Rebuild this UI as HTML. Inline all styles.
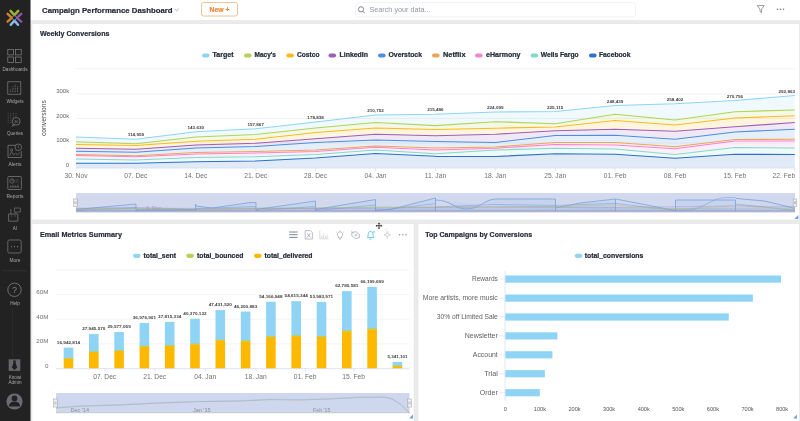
<!DOCTYPE html>
<html lang="en"><head><meta charset="utf-8"><title>Campaign Performance Dashboard</title>
<style>
html,body{margin:0;padding:0;background:#e9e9e9;overflow:hidden}
svg{display:block;will-change:transform}
text{font-family:"Liberation Sans",sans-serif}
</style></head><body>
<svg width="800" height="421" viewBox="0 0 800 421">
<rect x="0" y="0" width="800" height="421" fill="#ebebeb"/>
<rect x="30.5" y="0" width="769.5" height="20" fill="#ffffff"/>
<rect x="32" y="23.7" width="767.6" height="196.3" fill="#fff" stroke="#e0e0e0" stroke-width="0.5"/>
<rect x="32" y="223.5" width="382" height="200" fill="#fff" stroke="#e0e0e0" stroke-width="0.5"/>
<rect x="418" y="223.5" width="381.6" height="200" fill="#fff" stroke="#e0e0e0" stroke-width="0.5"/>
<rect x="0" y="0" width="30.5" height="421" fill="#222222"/>
<text x="42" y="13.2" font-size="8.0" font-weight="bold" fill="#242d3a" text-anchor="start" stroke="#242d3a" stroke-width="0.22" textLength="130.6" lengthAdjust="spacingAndGlyphs" >Campaign Performance Dashboard</text>
<path d="M174.6 8.8 L176.7 10.9 L178.8 8.8" fill="none" stroke="#8a8f98" stroke-width="0.7"/>
<rect x="201.5" y="2.5" width="36" height="13.5" rx="2" fill="#fff" stroke="#f2b27c" stroke-width="0.8"/>
<text x="219.5" y="12" font-size="7" font-weight="bold" fill="#ee8a3c" text-anchor="middle" stroke="#ee8a3c" stroke-width="0.22" textLength="20" lengthAdjust="spacingAndGlyphs" >New +</text>
<rect x="355.5" y="2.6" width="280" height="14.4" rx="3" fill="#fff" stroke="#ebedf0" stroke-width="0.7"/>
<circle cx="361" cy="9.3" r="2.6" fill="none" stroke="#5f6875" stroke-width="0.8"/><path d="M363 11.3 L364.8 13.1" stroke="#5f6875" stroke-width="0.8"/>
<text x="369.5" y="12.2" font-size="7.2" font-weight="normal" fill="#8f97a3" text-anchor="start" textLength="61" lengthAdjust="spacingAndGlyphs" >Search your data...</text>
<path d="M757.3 5.6 H764.2 L761.6 9.2 V12.6 L760 11.4 V9.2 Z" fill="none" stroke="#6b7380" stroke-width="0.7" stroke-linejoin="round"/>
<circle cx="777.5" cy="9.3" r="0.8" fill="#6b7380"/>
<circle cx="780.5" cy="9.3" r="0.8" fill="#6b7380"/>
<circle cx="783.5" cy="9.3" r="0.8" fill="#6b7380"/>
<g fill="none" stroke-width="2.5" stroke-linecap="round" stroke-linejoin="miter"><path d="M10.6 10.9 L14.4 15.2 L18.2 10.9" stroke="#9bb23a"/><path d="M7.6 13.9 L11.8 17.8 L7.6 21.7" stroke="#d67f2a"/><path d="M21.2 13.9 L17 17.8 L21.2 21.7" stroke="#9150ab"/><path d="M10.8 24.8 L14.4 20.6 L18 24.8" stroke="#86bce6"/></g><circle cx="14.4" cy="17.8" r="2.1" fill="#222" stroke="#7d8995" stroke-width="0.9"/>
<rect x="7.8" y="49.5" width="5.6" height="5.4" fill="none" stroke="#828282" stroke-width="0.7"/>
<rect x="15.6" y="49.5" width="5.6" height="5.4" fill="none" stroke="#828282" stroke-width="0.7"/>
<rect x="7.8" y="57" width="5.6" height="5.4" fill="none" stroke="#828282" stroke-width="0.7"/>
<rect x="15.6" y="57" width="5.6" height="5.4" fill="none" stroke="#828282" stroke-width="0.7"/>
<text x="15" y="71.3" font-size="4.5" font-weight="normal" fill="#a9a9a9" text-anchor="middle" textLength="25" lengthAdjust="spacingAndGlyphs" >Dashboards</text>
<rect x="7.8" y="81.8" width="13" height="12.4" fill="none" stroke="#828282" stroke-width="0.7"/>
<path d="M10.6 92 V89" stroke="#828282" stroke-width="0.8" stroke-dasharray="0.9 0.7"/>
<path d="M12.899999999999999 92 V86.5" stroke="#828282" stroke-width="0.8" stroke-dasharray="0.9 0.7"/>
<path d="M15.2 92 V84" stroke="#828282" stroke-width="0.8" stroke-dasharray="0.9 0.7"/>
<path d="M17.5 92 V86" stroke="#828282" stroke-width="0.8" stroke-dasharray="0.9 0.7"/>
<text x="15" y="102.6" font-size="4.5" font-weight="normal" fill="#a9a9a9" text-anchor="middle" textLength="17" lengthAdjust="spacingAndGlyphs" >Widgets</text>
<path d="M8.2 113 V123.5" stroke="#828282" stroke-width="0.6" stroke-dasharray="1 0.8" opacity="0.75"/>
<path d="M10.799999999999999 113 V123.5" stroke="#828282" stroke-width="0.6" stroke-dasharray="1 0.8" opacity="0.75"/>
<path d="M13.399999999999999 113 V123.5" stroke="#828282" stroke-width="0.6" stroke-dasharray="1 0.8" opacity="0.75"/>
<path d="M16.0 113 V123.5" stroke="#828282" stroke-width="0.6" stroke-dasharray="1 0.8" opacity="0.75"/>
<circle cx="16.2" cy="121.3" r="3.9" fill="#222" stroke="#828282" stroke-width="0.7"/>
<path d="M13.4 124.2 L12 126.3 L14.9 125" fill="none" stroke="#828282" stroke-width="0.6"/>
<text x="16.2" y="122.7" font-size="3.6" font-weight="normal" fill="#828282" text-anchor="middle" >30</text>
<text x="15" y="134.5" font-size="4.5" font-weight="normal" fill="#a9a9a9" text-anchor="middle" textLength="16" lengthAdjust="spacingAndGlyphs" >Queries</text>
<path d="M15.5 145.3 H8 V157.5 H21.3 V151" fill="none" stroke="#828282" stroke-width="0.7"/>
<circle cx="18.3" cy="147.3" r="3.3" fill="#222" stroke="#828282" stroke-width="0.7"/>
<path d="M18.3 145.5 V147.8 M18.3 148.6 V149.2" stroke="#828282" stroke-width="0.6"/>
<circle cx="11.6" cy="150" r="1.1" fill="none" stroke="#828282" stroke-width="0.6"/>
<path d="M9.6 155.5 L11.6 151.6 L13.6 155 L15.8 153 L17.6 155.2 L19.8 152.4" fill="none" stroke="#828282" stroke-width="0.6"/>
<text x="15" y="166.2" font-size="4.5" font-weight="normal" fill="#a9a9a9" text-anchor="middle" textLength="13" lengthAdjust="spacingAndGlyphs" >Alerts</text>
<rect x="7.8" y="176.5" width="13.6" height="13" rx="1" fill="none" stroke="#828282" stroke-width="0.7"/>
<circle cx="12" cy="181" r="2.2" fill="none" stroke="#828282" stroke-width="0.6"/><path d="M12 179.6 V181 H13.2" fill="none" stroke="#828282" stroke-width="0.5"/>
<path d="M15.6 180 H19 M15.6 182 H19" stroke="#828282" stroke-width="0.6" stroke-dasharray="1 0.6"/>
<path d="M10 187 H19.2 M10.6 187 V185.5 M13 187 V184.8 M15.4 187 V185.6 M17.8 187 V184.6" stroke="#828282" stroke-width="0.6"/>
<text x="15" y="197.8" font-size="4.5" font-weight="normal" fill="#a9a9a9" text-anchor="middle" textLength="17" lengthAdjust="spacingAndGlyphs" >Reports</text>
<path d="M8.6 214 H17.8 V221.2 H8.6 Z" fill="none" stroke="#828282" stroke-width="0.7"/>
<path d="M14.4 208 H20.4 V212 H17 L15.6 213.2 V212 H14.4 Z" fill="none" stroke="#828282" stroke-width="0.6"/>
<path d="M10.8 210.4 V213.8" stroke="#828282" stroke-width="0.6"/><circle cx="10.8" cy="209.8" r="0.6" fill="#828282"/>
<path d="M11.4 215.4 V216.6 M15 215.4 V216.6" stroke="#828282" stroke-width="0.7"/>
<text x="15" y="229.5" font-size="4.5" font-weight="normal" fill="#a9a9a9" text-anchor="middle" >AI</text>
<rect x="7.8" y="240" width="13.4" height="13" rx="1.6" fill="none" stroke="#828282" stroke-width="0.7"/>
<circle cx="11.6" cy="246.7" r="0.6" fill="#828282"/>
<circle cx="14.5" cy="246.7" r="0.6" fill="#828282"/>
<circle cx="17.4" cy="246.7" r="0.6" fill="#828282"/>
<text x="15" y="261.6" font-size="4.5" font-weight="normal" fill="#a9a9a9" text-anchor="middle" textLength="11" lengthAdjust="spacingAndGlyphs" >More</text>
<path d="M3 270.8 H27" stroke="#555" stroke-width="0.5" stroke-dasharray="1.2 0.5"/>
<circle cx="14.5" cy="289.8" r="6.7" fill="none" stroke="#828282" stroke-width="0.8"/>
<text x="14.5" y="293" font-size="9" font-weight="normal" fill="#828282" text-anchor="middle" >?</text>
<text x="15" y="304.6" font-size="4.5" font-weight="normal" fill="#a9a9a9" text-anchor="middle" textLength="9.5" lengthAdjust="spacingAndGlyphs" >Help</text>
<path d="M12.4 309 V357" stroke="#303030" stroke-width="0.8"/>
<rect x="8.7" y="359.3" width="11.6" height="11.6" fill="#63676c"/>
<path d="M13 360.6 H16 L15.5 362.8 L17.2 367.6 L14.5 370 L11.8 367.6 L13.5 362.8 Z" fill="#1e1e1e"/>
<text x="15" y="379" font-size="4.5" font-weight="normal" fill="#a9a9a9" text-anchor="middle" textLength="12.5" lengthAdjust="spacingAndGlyphs" >Knowi</text>
<text x="15" y="384" font-size="4.5" font-weight="normal" fill="#a9a9a9" text-anchor="middle" textLength="13" lengthAdjust="spacingAndGlyphs" >Admin</text>
<circle cx="14.5" cy="401.5" r="8.1" fill="#696d73"/>
<circle cx="14.5" cy="398.4" r="2.9" fill="#222"/>
<path d="M9 406.6 C9 402.8 11.4 401.8 14.5 401.8 C17.6 401.8 20 402.8 20 406.6 Z" fill="#222"/>
<text x="40" y="36.1" font-size="7.7" font-weight="bold" fill="#242d3a" text-anchor="start" stroke="#242d3a" stroke-width="0.22" textLength="69.5" lengthAdjust="spacingAndGlyphs" >Weekly Conversions</text>
<rect x="202" y="53.4" width="7.6" height="4.2" rx="2.1" fill="#8fd4f5"/>
<text x="212.6" y="57.1" font-size="6.6" font-weight="bold" fill="#242d3a" text-anchor="start" stroke="#242d3a" stroke-width="0.22" textLength="21" lengthAdjust="spacingAndGlyphs" >Target</text>
<rect x="244" y="53.4" width="7.6" height="4.2" rx="2.1" fill="#b3d455"/>
<text x="254.5" y="57.1" font-size="6.6" font-weight="bold" fill="#242d3a" text-anchor="start" stroke="#242d3a" stroke-width="0.22" textLength="21.5" lengthAdjust="spacingAndGlyphs" >Macy's</text>
<rect x="286.3" y="53.4" width="7.6" height="4.2" rx="2.1" fill="#fcbb1d"/>
<text x="297" y="57.1" font-size="6.6" font-weight="bold" fill="#242d3a" text-anchor="start" stroke="#242d3a" stroke-width="0.22" textLength="22.5" lengthAdjust="spacingAndGlyphs" >Costco</text>
<rect x="328.5" y="53.4" width="7.6" height="4.2" rx="2.1" fill="#9c5fb8"/>
<text x="339.5" y="57.1" font-size="6.6" font-weight="bold" fill="#242d3a" text-anchor="start" stroke="#242d3a" stroke-width="0.22" textLength="28.5" lengthAdjust="spacingAndGlyphs" >LinkedIn</text>
<rect x="378" y="53.4" width="7.6" height="4.2" rx="2.1" fill="#4a8fe2"/>
<text x="388.5" y="57.1" font-size="6.6" font-weight="bold" fill="#242d3a" text-anchor="start" stroke="#242d3a" stroke-width="0.22" textLength="33.5" lengthAdjust="spacingAndGlyphs" >Overstock</text>
<rect x="432" y="53.4" width="7.6" height="4.2" rx="2.1" fill="#f0a35a"/>
<text x="443" y="57.1" font-size="6.6" font-weight="bold" fill="#242d3a" text-anchor="start" stroke="#242d3a" stroke-width="0.22" textLength="22.5" lengthAdjust="spacingAndGlyphs" >Netflix</text>
<rect x="475" y="53.4" width="7.6" height="4.2" rx="2.1" fill="#f684d2"/>
<text x="486" y="57.1" font-size="6.6" font-weight="bold" fill="#242d3a" text-anchor="start" stroke="#242d3a" stroke-width="0.22" textLength="34.5" lengthAdjust="spacingAndGlyphs" >eHarmony</text>
<rect x="530.6" y="53.4" width="7.6" height="4.2" rx="2.1" fill="#7fdcc9"/>
<text x="540.7" y="57.1" font-size="6.6" font-weight="bold" fill="#242d3a" text-anchor="start" stroke="#242d3a" stroke-width="0.22" textLength="38" lengthAdjust="spacingAndGlyphs" >Wells Fargo</text>
<rect x="589" y="53.4" width="7.6" height="4.2" rx="2.1" fill="#2e6fcf"/>
<text x="599" y="57.1" font-size="6.6" font-weight="bold" fill="#242d3a" text-anchor="start" stroke="#242d3a" stroke-width="0.22" textLength="31.5" lengthAdjust="spacingAndGlyphs" >Facebook</text>
<path d="M76 68.7 H795" stroke="#ececec" stroke-width="0.7"/>
<path d="M76 94.0 H795" stroke="#ececec" stroke-width="0.7"/>
<path d="M76 118.4 H795" stroke="#ececec" stroke-width="0.7"/>
<path d="M76 143.0 H795" stroke="#ececec" stroke-width="0.7"/>
<text x="69.2" y="93.1" font-size="6.0" font-weight="normal" fill="#666" text-anchor="end" >300k</text>
<text x="69.2" y="117.5" font-size="6.0" font-weight="normal" fill="#666" text-anchor="end" >200k</text>
<text x="69.2" y="142.1" font-size="6.0" font-weight="normal" fill="#666" text-anchor="end" >100k</text>
<text x="69.2" y="166.79999999999998" font-size="6.0" font-weight="normal" fill="#666" text-anchor="end" >0</text>
<text x="0" y="0" font-size="7.6" font-weight="normal" fill="#444" text-anchor="middle" textLength="36" lengthAdjust="spacingAndGlyphs" transform="translate(45.6,118) rotate(-90)">conversions</text>
<path d="M76.0 163.2 L135.9 163.2 L195.8 161.7 L255.7 161 L315.6 158 L375.5 153.5 L435.4 156.3 L495.3 156.5 L555.2 153.7 L615.1 154.3 L675.0 158.2 L734.9 154.2 L794.8 154.5 L794.8 167.7 L734.9 167.7 L675.0 167.7 L615.1 167.7 L555.2 167.7 L495.3 167.7 L435.4 167.7 L375.5 167.7 L315.6 167.7 L255.7 167.7 L195.8 167.7 L135.9 167.7 L76.0 167.7 Z" fill="#2e6fcf" fill-opacity="0.14"/>
<path d="M76.0 159 L135.9 160 L195.8 157.5 L255.7 156.7 L315.6 154.5 L375.5 150 L435.4 153.7 L495.3 150 L555.2 148.2 L615.1 149 L675.0 154.5 L734.9 147.5 L794.8 148 L794.8 154.5 L734.9 154.2 L675.0 158.2 L615.1 154.3 L555.2 153.7 L495.3 156.5 L435.4 156.3 L375.5 153.5 L315.6 158 L255.7 161 L195.8 161.7 L135.9 163.2 L76.0 163.2 Z" fill="#7fdcc9" fill-opacity="0.14"/>
<path d="M76.0 155.5 L135.9 156.7 L195.8 154 L255.7 153 L315.6 151.5 L375.5 147.2 L435.4 150 L495.3 148.2 L555.2 144.5 L615.1 145 L675.0 148.7 L734.9 141 L794.8 141 L794.8 148 L734.9 147.5 L675.0 154.5 L615.1 149 L555.2 148.2 L495.3 150 L435.4 153.7 L375.5 150 L315.6 154.5 L255.7 156.7 L195.8 157.5 L135.9 160 L76.0 159 Z" fill="#f684d2" fill-opacity="0.14"/>
<path d="M76.0 154.5 L135.9 155.7 L195.8 152.5 L255.7 151.5 L315.6 150 L375.5 146 L435.4 148 L495.3 147 L555.2 142.5 L615.1 142.5 L675.0 146.7 L734.9 139.5 L794.8 139.2 L794.8 141 L734.9 141 L675.0 148.7 L615.1 145 L555.2 144.5 L495.3 148.2 L435.4 150 L375.5 147.2 L315.6 151.5 L255.7 153 L195.8 154 L135.9 156.7 L76.0 155.5 Z" fill="#f0a35a" fill-opacity="0.14"/>
<path d="M76.0 151.2 L135.9 152.2 L195.8 148 L255.7 146.5 L315.6 142.5 L375.5 140 L435.4 141.5 L495.3 142.5 L555.2 135.5 L615.1 135.2 L675.0 139.2 L734.9 132 L794.8 129.2 L794.8 139.2 L734.9 139.5 L675.0 146.7 L615.1 142.5 L555.2 142.5 L495.3 147 L435.4 148 L375.5 146 L315.6 150 L255.7 151.5 L195.8 152.5 L135.9 155.7 L76.0 154.5 Z" fill="#4a8fe2" fill-opacity="0.14"/>
<path d="M76.0 148.2 L135.9 149.2 L195.8 145 L255.7 143.2 L315.6 138.7 L375.5 134.2 L435.4 135.7 L495.3 134.2 L555.2 130.7 L615.1 129.2 L675.0 131.2 L734.9 126.7 L794.8 122.5 L794.8 129.2 L734.9 132 L675.0 139.2 L615.1 135.2 L555.2 135.5 L495.3 142.5 L435.4 141.5 L375.5 140 L315.6 142.5 L255.7 146.5 L195.8 148 L135.9 152.2 L76.0 151.2 Z" fill="#9c5fb8" fill-opacity="0.14"/>
<path d="M76.0 144.5 L135.9 145.5 L195.8 141.2 L255.7 139.2 L315.6 132.5 L375.5 128 L435.4 129.5 L495.3 128.2 L555.2 127 L615.1 120.5 L675.0 125 L734.9 118 L794.8 115.7 L794.8 122.5 L734.9 126.7 L675.0 131.2 L615.1 129.2 L555.2 130.7 L495.3 134.2 L435.4 135.7 L375.5 134.2 L315.6 138.7 L255.7 143.2 L195.8 145 L135.9 149.2 L76.0 148.2 Z" fill="#fcbb1d" fill-opacity="0.14"/>
<path d="M76.0 141.7 L135.9 143.7 L195.8 137 L255.7 134.5 L315.6 128 L375.5 122.5 L435.4 125.6 L495.3 121.7 L555.2 123.7 L615.1 114.2 L675.0 120 L734.9 111.7 L794.8 110 L794.8 115.7 L734.9 118 L675.0 125 L615.1 120.5 L555.2 127 L495.3 128.2 L435.4 129.5 L375.5 128 L315.6 132.5 L255.7 139.2 L195.8 141.2 L135.9 145.5 L76.0 144.5 Z" fill="#b3d455" fill-opacity="0.14"/>
<path d="M76.0 137 L135.9 139.2 L195.8 131.7 L255.7 128.7 L315.6 122 L375.5 115 L435.4 114.2 L495.3 112 L555.2 111.5 L615.1 105.5 L675.0 103.7 L734.9 100.5 L794.8 95.5 L794.8 110 L734.9 111.7 L675.0 120 L615.1 114.2 L555.2 123.7 L495.3 121.7 L435.4 125.6 L375.5 122.5 L315.6 128 L255.7 134.5 L195.8 137 L135.9 143.7 L76.0 141.7 Z" fill="#8fd4f5" fill-opacity="0.14"/>
<polyline points="76.0 163.2 135.9 163.2 195.8 161.7 255.7 161 315.6 158 375.5 153.5 435.4 156.3 495.3 156.5 555.2 153.7 615.1 154.3 675.0 158.2 734.9 154.2 794.8 154.5" fill="none" stroke="#2e6fcf" stroke-width="1.15" stroke-linejoin="round"/>
<polyline points="76.0 159 135.9 160 195.8 157.5 255.7 156.7 315.6 154.5 375.5 150 435.4 153.7 495.3 150 555.2 148.2 615.1 149 675.0 154.5 734.9 147.5 794.8 148" fill="none" stroke="#7fdcc9" stroke-width="1.15" stroke-linejoin="round"/>
<polyline points="76.0 155.5 135.9 156.7 195.8 154 255.7 153 315.6 151.5 375.5 147.2 435.4 150 495.3 148.2 555.2 144.5 615.1 145 675.0 148.7 734.9 141 794.8 141" fill="none" stroke="#f684d2" stroke-width="1.15" stroke-linejoin="round"/>
<polyline points="76.0 154.5 135.9 155.7 195.8 152.5 255.7 151.5 315.6 150 375.5 146 435.4 148 495.3 147 555.2 142.5 615.1 142.5 675.0 146.7 734.9 139.5 794.8 139.2" fill="none" stroke="#f0a35a" stroke-width="1.15" stroke-linejoin="round"/>
<polyline points="76.0 151.2 135.9 152.2 195.8 148 255.7 146.5 315.6 142.5 375.5 140 435.4 141.5 495.3 142.5 555.2 135.5 615.1 135.2 675.0 139.2 734.9 132 794.8 129.2" fill="none" stroke="#4a8fe2" stroke-width="1.15" stroke-linejoin="round"/>
<polyline points="76.0 148.2 135.9 149.2 195.8 145 255.7 143.2 315.6 138.7 375.5 134.2 435.4 135.7 495.3 134.2 555.2 130.7 615.1 129.2 675.0 131.2 734.9 126.7 794.8 122.5" fill="none" stroke="#9c5fb8" stroke-width="1.15" stroke-linejoin="round"/>
<polyline points="76.0 144.5 135.9 145.5 195.8 141.2 255.7 139.2 315.6 132.5 375.5 128 435.4 129.5 495.3 128.2 555.2 127 615.1 120.5 675.0 125 734.9 118 794.8 115.7" fill="none" stroke="#fcbb1d" stroke-width="1.15" stroke-linejoin="round"/>
<polyline points="76.0 141.7 135.9 143.7 195.8 137 255.7 134.5 315.6 128 375.5 122.5 435.4 125.6 495.3 121.7 555.2 123.7 615.1 114.2 675.0 120 734.9 111.7 794.8 110" fill="none" stroke="#b3d455" stroke-width="1.15" stroke-linejoin="round"/>
<polyline points="76.0 137 135.9 139.2 195.8 131.7 255.7 128.7 315.6 122 375.5 115 435.4 114.2 495.3 112 555.2 111.5 615.1 105.5 675.0 103.7 734.9 100.5 794.8 95.5" fill="none" stroke="#8fd4f5" stroke-width="1.15" stroke-linejoin="round"/>
<path d="M76 168.0 H795" stroke="#ccd6eb" stroke-width="0.7"/>
<text x="135.9" y="136.39999999999998" font-size="4.4" font-weight="bold" fill="#404040" text-anchor="middle" textLength="16.5" lengthAdjust="spacingAndGlyphs" >114,959</text>
<text x="195.8" y="128.89999999999998" font-size="4.4" font-weight="bold" fill="#404040" text-anchor="middle" textLength="16.5" lengthAdjust="spacingAndGlyphs" >143,630</text>
<text x="255.7" y="125.89999999999999" font-size="4.4" font-weight="bold" fill="#404040" text-anchor="middle" textLength="16.5" lengthAdjust="spacingAndGlyphs" >157,867</text>
<text x="315.6" y="119.2" font-size="4.4" font-weight="bold" fill="#404040" text-anchor="middle" textLength="16.5" lengthAdjust="spacingAndGlyphs" >178,838</text>
<text x="375.5" y="112.2" font-size="4.4" font-weight="bold" fill="#404040" text-anchor="middle" textLength="16.5" lengthAdjust="spacingAndGlyphs" >210,752</text>
<text x="435.4" y="111.4" font-size="4.4" font-weight="bold" fill="#404040" text-anchor="middle" textLength="16.5" lengthAdjust="spacingAndGlyphs" >215,486</text>
<text x="495.3" y="109.2" font-size="4.4" font-weight="bold" fill="#404040" text-anchor="middle" textLength="16.5" lengthAdjust="spacingAndGlyphs" >224,099</text>
<text x="555.2" y="108.7" font-size="4.4" font-weight="bold" fill="#404040" text-anchor="middle" textLength="16.5" lengthAdjust="spacingAndGlyphs" >225,115</text>
<text x="615.1" y="102.7" font-size="4.4" font-weight="bold" fill="#404040" text-anchor="middle" textLength="16.5" lengthAdjust="spacingAndGlyphs" >248,439</text>
<text x="675.0" y="100.9" font-size="4.4" font-weight="bold" fill="#404040" text-anchor="middle" textLength="16.5" lengthAdjust="spacingAndGlyphs" >258,402</text>
<text x="734.9" y="97.7" font-size="4.4" font-weight="bold" fill="#404040" text-anchor="middle" textLength="16.5" lengthAdjust="spacingAndGlyphs" >270,756</text>
<text x="795" y="92.7" font-size="4.4" font-weight="bold" fill="#404040" text-anchor="end" textLength="16.5" lengthAdjust="spacingAndGlyphs" >292,863</text>
<path d="M76.0 168 V171" stroke="#ccd6eb" stroke-width="0.6"/>
<text x="76.0" y="178.4" font-size="6.7" font-weight="normal" fill="#707070" text-anchor="middle" >30. Nov</text>
<path d="M135.9 168 V171" stroke="#ccd6eb" stroke-width="0.6"/>
<text x="135.9" y="178.4" font-size="6.7" font-weight="normal" fill="#707070" text-anchor="middle" >07. Dec</text>
<path d="M195.8 168 V171" stroke="#ccd6eb" stroke-width="0.6"/>
<text x="195.8" y="178.4" font-size="6.7" font-weight="normal" fill="#707070" text-anchor="middle" >14. Dec</text>
<path d="M255.7 168 V171" stroke="#ccd6eb" stroke-width="0.6"/>
<text x="255.7" y="178.4" font-size="6.7" font-weight="normal" fill="#707070" text-anchor="middle" >21. Dec</text>
<path d="M315.6 168 V171" stroke="#ccd6eb" stroke-width="0.6"/>
<text x="315.6" y="178.4" font-size="6.7" font-weight="normal" fill="#707070" text-anchor="middle" >28. Dec</text>
<path d="M375.5 168 V171" stroke="#ccd6eb" stroke-width="0.6"/>
<text x="375.5" y="178.4" font-size="6.7" font-weight="normal" fill="#707070" text-anchor="middle" >04. Jan</text>
<path d="M435.4 168 V171" stroke="#ccd6eb" stroke-width="0.6"/>
<text x="435.4" y="178.4" font-size="6.7" font-weight="normal" fill="#707070" text-anchor="middle" >11. Jan</text>
<path d="M495.3 168 V171" stroke="#ccd6eb" stroke-width="0.6"/>
<text x="495.3" y="178.4" font-size="6.7" font-weight="normal" fill="#707070" text-anchor="middle" >18. Jan</text>
<path d="M555.2 168 V171" stroke="#ccd6eb" stroke-width="0.6"/>
<text x="555.2" y="178.4" font-size="6.7" font-weight="normal" fill="#707070" text-anchor="middle" >25. Jan</text>
<path d="M615.1 168 V171" stroke="#ccd6eb" stroke-width="0.6"/>
<text x="615.1" y="178.4" font-size="6.7" font-weight="normal" fill="#707070" text-anchor="middle" >01. Feb</text>
<path d="M675.0 168 V171" stroke="#ccd6eb" stroke-width="0.6"/>
<text x="675.0" y="178.4" font-size="6.7" font-weight="normal" fill="#707070" text-anchor="middle" >08. Feb</text>
<path d="M734.9 168 V171" stroke="#ccd6eb" stroke-width="0.6"/>
<text x="734.9" y="178.4" font-size="6.7" font-weight="normal" fill="#707070" text-anchor="middle" >15. Feb</text>
<path d="M794.8 168 V171" stroke="#ccd6eb" stroke-width="0.6"/>
<text x="795.2" y="178.4" font-size="6.7" font-weight="normal" fill="#707070" text-anchor="end" >22. Feb</text>
<rect x="76" y="193" width="719" height="19.4" fill="#d2d9ef"/>
<rect x="76" y="207.6" width="719" height="4.8" fill="#bcc8e6" opacity="0.75"/>
<path d="M76 209.5 L136 204 V211 M136 209.3 L195.5 209.5 M195.5 211 V204 L196 206 L212 208 L250 202.6 L256 202.6 V211 M256 209.5 L315.5 201 V211 M315.5 209.5 L375.5 199.5 V211 M375.5 210 L390 209.6 L435.5 198 V211 M435.5 200 C450 200 455 209 466 209 C480 209 484 199.4 495.5 199 H555.5 V211 M555.5 208 L580 203 L615.5 199 V211 M615.5 199 L675.5 210.6 M675.5 211 V200 H735.5 V211 M735.5 198.4 L765 201 L795 208.4" fill="#9fc0ea" fill-opacity="0.22" stroke="#5f97d6" stroke-width="0.7" opacity="0.9"/>
<path d="M76 210.4 L136 208 M136 210.6 L195.5 210.4 M195.5 208.6 L256 206.4 M256 210.6 L315.5 206.4 M315.5 210.6 L375.5 205 M375.5 210.8 L435.5 203.6 M435.5 207 L495.5 204.4 L555.5 205.4 L615.5 203.4 L675.5 210.4 M675.5 210.4 L690 210 C705 208 712 198 725 197.5 L735.5 197.5 M735.5 204 L795 210.4" fill="#9fc0ea" fill-opacity="0.18" stroke="#6ea0dc" stroke-width="0.6" opacity="0.85"/>
<path d="M76 210.4 H795" stroke="#6f9bd8" stroke-width="1.2" opacity="0.5"/>
<path d="M76 211.6 H795" stroke="#c0708c" stroke-width="0.5" opacity="0.7"/>
<text x="146" y="210.3" font-size="5.2" font-weight="normal" fill="#8c93a6" text-anchor="start" opacity="0.7">8. Dec</text>
<path d="M76 209.8 L136 208.8 L195.5 210 L256 209 L435.5 206.6 L495.5 207.6 L615.5 205 L675.5 209.6 L735.5 205.4 L795 209.4" fill="none" stroke="#c2b85c" stroke-width="0.5" opacity="0.8"/>
<path d="M76 209 L136 208.2 M136 208.6 L195.5 208.8 L256 208 L315.5 207.8 L375.5 207 L435.5 208 L555.5 207.4 L675.5 208.6 L795 207.8" fill="none" stroke="#8dbf8f" stroke-width="0.5" opacity="0.8"/>
<path d="M76 208.4 L136 207.4 L195.5 209.2 L256 208.6 L375.5 208.4 L495.5 206.4 L615.5 207.4 L735.5 206 L795 206.6" fill="none" stroke="#a077c2" stroke-width="0.45" opacity="0.7"/>
<rect x="73.7" y="199" width="3.6" height="7.4" fill="#f2f2f2" stroke="#999" stroke-width="0.5"/><path d="M74.9 201.3 V204.2 M76.1 201.3 V204.2" stroke="#777" stroke-width="0.4"/>
<rect x="793.2" y="199" width="3.6" height="7.4" fill="#f2f2f2" stroke="#999" stroke-width="0.5"/><path d="M794.4 201.3 V204.2 M795.6 201.3 V204.2" stroke="#777" stroke-width="0.4"/>
<path d="M798.4 215 V219 H794.4 Z" fill="#6fa3e0"/>
<text x="40" y="236.6" font-size="7.7" font-weight="bold" fill="#242d3a" text-anchor="start" stroke="#242d3a" stroke-width="0.22" textLength="82" lengthAdjust="spacingAndGlyphs" >Email Metrics Summary</text>
<path d="M289.2 232 H297.6 M289.2 234.7 H297.6 M289.2 237.4 H297.6" stroke="#5f6977" stroke-width="0.8"/>
<path d="M305.2 230.6 H310.4 L312.4 232.6 V239 H305.2 Z" fill="none" stroke="#8b929c" stroke-width="0.6"/><path d="M307.2 233.2 L310.4 237.6 M310.4 233.2 L307.2 237.6" stroke="#8b929c" stroke-width="0.6"/>
<path d="M319.8 230.6 V238.8 H328.6" fill="none" stroke="#bcc1c9" stroke-width="0.6"/><path d="M321.8 238 V235 M323.6 238 V233.4 M325.4 238 V235.6 M327.2 238 V234.2" stroke="#bcc1c9" stroke-width="0.8" stroke-dasharray="0.9 0.4"/>
<path d="M338.4 236.6 C336.6 235 337.2 231.8 340 231.8 C342.8 231.8 343.4 235 341.6 236.6 V237.8 H338.4 Z M338.9 239 H341.1" fill="none" stroke="#8b929c" stroke-width="0.6"/><path d="M340 230 V230.8 M336.4 232 L337 232.5 M343.6 232 L343 232.5" stroke="#8b929c" stroke-width="0.5"/>
<path d="M351.8 232.6 L355.8 231.6 L359.4 234.4 V237.6 L355.6 238.6 L351.8 235.8 Z" fill="none" stroke="#8b929c" stroke-width="0.6"/><circle cx="356" cy="235.2" r="0.9" fill="none" stroke="#8b929c" stroke-width="0.5"/><path d="M351.2 231 L353.4 233" stroke="#8b929c" stroke-width="0.5"/>
<path d="M367.4 237.6 C368.2 236.8 368 235.6 368.2 234.2 C368.4 232.4 369.4 231.4 370.6 231.4 C371.8 231.4 372.8 232.4 373 234.2 C373.2 235.6 373 236.8 373.8 237.6 Z M369.6 239 H371.6" fill="none" stroke="#38b4f3" stroke-width="0.75"/><path d="M374 230.8 V233 M372.9 231.9 H375.1" stroke="#38b4f3" stroke-width="0.5"/>
<path d="M387.3 231.4 L388.2 234 L390.7 234.8 L388.2 235.7 L387.3 238.4 L386.4 235.7 L383.9 234.8 L386.4 234 Z" fill="none" stroke="#a9aeb6" stroke-width="0.5"/><path d="M385.2 229.4 L385.8 230.2 M387 228.6 V229.4" stroke="#a9aeb6" stroke-width="0.5"/>
<circle cx="399.6" cy="234.7" r="0.7" fill="#8b929c"/>
<circle cx="402.8" cy="234.7" r="0.7" fill="#8b929c"/>
<circle cx="406" cy="234.7" r="0.7" fill="#8b929c"/>
<g transform="translate(379,225.8) scale(0.8)"><path d="M0 -4.2 L1.7 -2.3 H0.6 V-0.6 H2.3 V-1.7 L4.2 0 L2.3 1.7 V0.6 H0.6 V2.3 H1.7 L0 4.2 L-1.7 2.3 H-0.6 V0.6 H-2.3 V1.7 L-4.2 0 L-2.3 -1.7 V-0.6 H-0.6 V-2.3 H-1.7 Z" fill="#111" stroke="#fff" stroke-width="0.3"/></g>
<rect x="133" y="253.7" width="7.6" height="4.3" rx="2.15" fill="#8fd4f5"/>
<text x="143.5" y="257.6" font-size="6.6" font-weight="bold" fill="#242d3a" text-anchor="start" stroke="#242d3a" stroke-width="0.22" textLength="32.5" lengthAdjust="spacingAndGlyphs" >total_sent</text>
<rect x="186.3" y="253.7" width="7.6" height="4.3" rx="2.15" fill="#b3d455"/>
<text x="197" y="257.6" font-size="6.6" font-weight="bold" fill="#242d3a" text-anchor="start" stroke="#242d3a" stroke-width="0.22" textLength="46.3" lengthAdjust="spacingAndGlyphs" >total_bounced</text>
<rect x="254" y="253.7" width="7.6" height="4.3" rx="2.15" fill="#fcb900"/>
<text x="264.5" y="257.6" font-size="6.6" font-weight="bold" fill="#242d3a" text-anchor="start" stroke="#242d3a" stroke-width="0.22" textLength="48" lengthAdjust="spacingAndGlyphs" >total_delivered</text>
<path d="M56 269.9 H409.5" stroke="#efefef" stroke-width="0.7"/>
<path d="M56 294.6 H409.5" stroke="#efefef" stroke-width="0.7"/>
<text x="48.4" y="293.95" font-size="6.2" font-weight="normal" fill="#707070" text-anchor="end" >60M</text>
<path d="M56 319.2 H409.5" stroke="#efefef" stroke-width="0.7"/>
<text x="48.4" y="318.59999999999997" font-size="6.2" font-weight="normal" fill="#707070" text-anchor="end" >40M</text>
<path d="M56 343.9 H409.5" stroke="#efefef" stroke-width="0.7"/>
<text x="48.4" y="343.25" font-size="6.2" font-weight="normal" fill="#707070" text-anchor="end" >20M</text>
<text x="48.4" y="367.9" font-size="6.2" font-weight="normal" fill="#707070" text-anchor="end" >0</text>
<rect x="63.7" y="347.62" width="9.6" height="11.02" fill="#8fd4f5"/>
<rect x="63.7" y="357.94" width="9.6" height="0.9" fill="#b3d455"/>
<rect x="63.7" y="358.64" width="9.6" height="9.86" fill="#fcb900"/>
<text x="68.5" y="343.7" font-size="4.3" font-weight="bold" fill="#404040" text-anchor="middle" textLength="23.3" lengthAdjust="spacingAndGlyphs" >16,942,814</text>
<rect x="89.0" y="334.06" width="9.6" height="17.93" fill="#8fd4f5"/>
<rect x="89.0" y="351.28" width="9.6" height="0.9" fill="#b3d455"/>
<rect x="89.0" y="351.98" width="9.6" height="16.52" fill="#fcb900"/>
<text x="93.8" y="330.2" font-size="4.3" font-weight="bold" fill="#404040" text-anchor="middle" textLength="23.3" lengthAdjust="spacingAndGlyphs" >27,945,570</text>
<rect x="114.3" y="332.05" width="9.6" height="18.95" fill="#8fd4f5"/>
<rect x="114.3" y="350.30" width="9.6" height="0.9" fill="#b3d455"/>
<rect x="114.3" y="351.00" width="9.6" height="17.50" fill="#fcb900"/>
<text x="119.1" y="328.1" font-size="4.3" font-weight="bold" fill="#404040" text-anchor="middle" textLength="23.3" lengthAdjust="spacingAndGlyphs" >29,577,059</text>
<rect x="139.6" y="322.93" width="9.6" height="23.64" fill="#8fd4f5"/>
<rect x="139.6" y="345.86" width="9.6" height="0.9" fill="#b3d455"/>
<rect x="139.6" y="346.56" width="9.6" height="21.94" fill="#fcb900"/>
<text x="144.4" y="319.0" font-size="4.3" font-weight="bold" fill="#404040" text-anchor="middle" textLength="23.3" lengthAdjust="spacingAndGlyphs" >36,976,901</text>
<rect x="164.9" y="321.89" width="9.6" height="24.05" fill="#8fd4f5"/>
<rect x="164.9" y="345.25" width="9.6" height="0.9" fill="#b3d455"/>
<rect x="164.9" y="345.95" width="9.6" height="22.55" fill="#fcb900"/>
<text x="169.7" y="318.0" font-size="4.3" font-weight="bold" fill="#404040" text-anchor="middle" textLength="23.3" lengthAdjust="spacingAndGlyphs" >37,815,334</text>
<rect x="190.2" y="318.74" width="9.6" height="25.60" fill="#8fd4f5"/>
<rect x="190.2" y="343.64" width="9.6" height="0.9" fill="#b3d455"/>
<rect x="190.2" y="344.34" width="9.6" height="24.16" fill="#fcb900"/>
<text x="195.0" y="314.8" font-size="4.3" font-weight="bold" fill="#404040" text-anchor="middle" textLength="23.3" lengthAdjust="spacingAndGlyphs" >40,370,132</text>
<rect x="215.5" y="310.04" width="9.6" height="30.24" fill="#8fd4f5"/>
<rect x="215.5" y="339.58" width="9.6" height="0.9" fill="#b3d455"/>
<rect x="215.5" y="340.28" width="9.6" height="28.22" fill="#fcb900"/>
<text x="220.3" y="306.1" font-size="4.3" font-weight="bold" fill="#404040" text-anchor="middle" textLength="23.3" lengthAdjust="spacingAndGlyphs" >47,431,520</text>
<rect x="240.8" y="311.56" width="9.6" height="29.58" fill="#8fd4f5"/>
<rect x="240.8" y="340.44" width="9.6" height="0.9" fill="#b3d455"/>
<rect x="240.8" y="341.14" width="9.6" height="27.36" fill="#fcb900"/>
<text x="245.6" y="307.7" font-size="4.3" font-weight="bold" fill="#404040" text-anchor="middle" textLength="23.3" lengthAdjust="spacingAndGlyphs" >46,200,883</text>
<rect x="266.1" y="301.74" width="9.6" height="35.21" fill="#8fd4f5"/>
<rect x="266.1" y="336.25" width="9.6" height="0.9" fill="#b3d455"/>
<rect x="266.1" y="336.95" width="9.6" height="31.55" fill="#fcb900"/>
<text x="270.9" y="297.8" font-size="4.3" font-weight="bold" fill="#404040" text-anchor="middle" textLength="23.3" lengthAdjust="spacingAndGlyphs" >54,166,948</text>
<rect x="291.4" y="301.19" width="9.6" height="34.90" fill="#8fd4f5"/>
<rect x="291.4" y="335.39" width="9.6" height="0.9" fill="#b3d455"/>
<rect x="291.4" y="336.09" width="9.6" height="32.41" fill="#fcb900"/>
<text x="296.2" y="297.3" font-size="4.3" font-weight="bold" fill="#404040" text-anchor="middle" textLength="23.3" lengthAdjust="spacingAndGlyphs" >54,615,344</text>
<rect x="316.7" y="301.96" width="9.6" height="34.98" fill="#8fd4f5"/>
<rect x="316.7" y="336.25" width="9.6" height="0.9" fill="#b3d455"/>
<rect x="316.7" y="336.95" width="9.6" height="31.55" fill="#fcb900"/>
<text x="321.5" y="298.1" font-size="4.3" font-weight="bold" fill="#404040" text-anchor="middle" textLength="23.3" lengthAdjust="spacingAndGlyphs" >53,983,971</text>
<rect x="342.0" y="291.12" width="9.6" height="40.03" fill="#8fd4f5"/>
<rect x="342.0" y="330.46" width="9.6" height="0.9" fill="#b3d455"/>
<rect x="342.0" y="331.16" width="9.6" height="37.34" fill="#fcb900"/>
<text x="346.8" y="287.2" font-size="4.3" font-weight="bold" fill="#404040" text-anchor="middle" textLength="23.3" lengthAdjust="spacingAndGlyphs" >62,780,581</text>
<rect x="367.3" y="286.91" width="9.6" height="42.27" fill="#8fd4f5"/>
<rect x="367.3" y="328.48" width="9.6" height="0.9" fill="#b3d455"/>
<rect x="367.3" y="329.18" width="9.6" height="39.32" fill="#fcb900"/>
<text x="372.1" y="283.0" font-size="4.3" font-weight="bold" fill="#404040" text-anchor="middle" textLength="23.3" lengthAdjust="spacingAndGlyphs" >66,199,699</text>
<rect x="392.6" y="361.92" width="9.6" height="4.12" fill="#8fd4f5"/>
<rect x="392.6" y="365.34" width="9.6" height="0.9" fill="#b3d455"/>
<rect x="392.6" y="366.04" width="9.6" height="2.46" fill="#fcb900"/>
<text x="397.4" y="358.0" font-size="4.3" font-weight="bold" fill="#404040" text-anchor="middle" textLength="20" lengthAdjust="spacingAndGlyphs" >5,341,101</text>
<path d="M56 368.7 H409.5" stroke="#ccd6eb" stroke-width="0.7"/>
<path d="M105 368.5 V371.5" stroke="#ccd6eb" stroke-width="0.6"/>
<text x="104.7" y="379.0" font-size="6.7" font-weight="normal" fill="#707070" text-anchor="middle" >07. Dec</text>
<path d="M155 368.5 V371.5" stroke="#ccd6eb" stroke-width="0.6"/>
<text x="154.7" y="379.0" font-size="6.7" font-weight="normal" fill="#707070" text-anchor="middle" >21. Dec</text>
<path d="M205.5 368.5 V371.5" stroke="#ccd6eb" stroke-width="0.6"/>
<text x="205.2" y="379.0" font-size="6.7" font-weight="normal" fill="#707070" text-anchor="middle" >04. Jan</text>
<path d="M256 368.5 V371.5" stroke="#ccd6eb" stroke-width="0.6"/>
<text x="255.7" y="379.0" font-size="6.7" font-weight="normal" fill="#707070" text-anchor="middle" >18. Jan</text>
<path d="M305.5 368.5 V371.5" stroke="#ccd6eb" stroke-width="0.6"/>
<text x="305.2" y="379.0" font-size="6.7" font-weight="normal" fill="#707070" text-anchor="middle" >01. Feb</text>
<path d="M354 368.5 V371.5" stroke="#ccd6eb" stroke-width="0.6"/>
<text x="353.7" y="379.0" font-size="6.7" font-weight="normal" fill="#707070" text-anchor="middle" >15. Feb</text>
<rect x="56" y="393" width="353.5" height="20" fill="#cfd7ee"/>
<path d="M56 408 L80 406.2 L120 405 L160 403 L200 401.6 L240 401 L270 399.6 L300 400 L330 399 L360 397.4 L385 397.2 L392 399 L400 404 L409.5 413" fill="none" stroke="#b5b29a" stroke-width="0.8"/>
<path d="M56 407.6 L80 405.8 L120 404.6 L160 402.6 L200 401.2 L240 400.6 L270 399.2 L300 399.6 L330 398.6 L360 397 L385 396.8 L392 398.6 L400 403.6 L409.5 412.6" fill="none" stroke="#9dc6ee" stroke-width="0.5"/>
<path d="M56 412.8 H409.5" stroke="#b5bf9a" stroke-width="0.5"/>
<text x="70.5" y="411.6" font-size="5.6" font-weight="normal" fill="#8a909c" text-anchor="start" textLength="18.5" lengthAdjust="spacingAndGlyphs" >Dec '14</text>
<text x="193" y="411.6" font-size="5.6" font-weight="normal" fill="#8a909c" text-anchor="start" textLength="17.5" lengthAdjust="spacingAndGlyphs" >Jan '15</text>
<text x="313" y="411.6" font-size="5.6" font-weight="normal" fill="#8a909c" text-anchor="start" textLength="17.5" lengthAdjust="spacingAndGlyphs" >Feb '15</text>
<rect x="53.5" y="399" width="4" height="8" fill="#f2f2f2" stroke="#999" stroke-width="0.5"/><path d="M54.9 401.5 V404.5 M56.1 401.5 V404.5" stroke="#777" stroke-width="0.4"/>
<rect x="407.5" y="399" width="4" height="8" fill="#f2f2f2" stroke="#999" stroke-width="0.5"/><path d="M408.9 401.5 V404.5 M410.1 401.5 V404.5" stroke="#777" stroke-width="0.4"/>
<path d="M413 414.5 V418.5 H409 Z" fill="#6fa3e0"/>
<text x="425.2" y="236.6" font-size="7.7" font-weight="bold" fill="#242d3a" text-anchor="start" stroke="#242d3a" stroke-width="0.22" textLength="107" lengthAdjust="spacingAndGlyphs" >Top Campaigns by Conversions</text>
<rect x="574.7" y="253.7" width="7.6" height="4.3" rx="2.15" fill="#8fd4f5"/>
<text x="584.8" y="257.6" font-size="6.6" font-weight="bold" fill="#242d3a" text-anchor="start" stroke="#242d3a" stroke-width="0.22" textLength="58.5" lengthAdjust="spacingAndGlyphs" >total_conversions</text>
<path d="M505 271 V401.5" stroke="#d6ddee" stroke-width="0.7"/>
<rect x="505.3" y="275.5" width="275.7" height="7.2" fill="#8fd4f5"/>
<path d="M499.5 279.1 H505" stroke="#d6ddee" stroke-width="0.6"/>
<text x="497.8" y="281.4" font-size="7" font-weight="normal" fill="#606060" text-anchor="end" textLength="25.8" lengthAdjust="spacingAndGlyphs" >Rewards</text>
<rect x="505.3" y="294.5" width="247.6" height="7.2" fill="#8fd4f5"/>
<path d="M499.5 298.1 H505" stroke="#d6ddee" stroke-width="0.6"/>
<text x="497.8" y="300.4" font-size="7" font-weight="normal" fill="#606060" text-anchor="end" textLength="75" lengthAdjust="spacingAndGlyphs" >More artists, more music</text>
<rect x="505.3" y="313.4" width="223.5" height="7.2" fill="#8fd4f5"/>
<path d="M499.5 317.0 H505" stroke="#d6ddee" stroke-width="0.6"/>
<text x="497.8" y="319.3" font-size="7" font-weight="normal" fill="#606060" text-anchor="end" textLength="61" lengthAdjust="spacingAndGlyphs" >30% off Limited Sale</text>
<rect x="505.3" y="332.3" width="52.1" height="7.2" fill="#8fd4f5"/>
<path d="M499.5 335.9 H505" stroke="#d6ddee" stroke-width="0.6"/>
<text x="497.8" y="338.2" font-size="7" font-weight="normal" fill="#606060" text-anchor="end" textLength="33" lengthAdjust="spacingAndGlyphs" >Newsletter</text>
<rect x="505.3" y="351.2" width="47.1" height="7.2" fill="#8fd4f5"/>
<path d="M499.5 354.8 H505" stroke="#d6ddee" stroke-width="0.6"/>
<text x="497.8" y="357.1" font-size="7" font-weight="normal" fill="#606060" text-anchor="end" textLength="25" lengthAdjust="spacingAndGlyphs" >Account</text>
<rect x="505.3" y="370.1" width="39.6" height="7.2" fill="#8fd4f5"/>
<path d="M499.5 373.8 H505" stroke="#d6ddee" stroke-width="0.6"/>
<text x="497.8" y="376.1" font-size="7" font-weight="normal" fill="#606060" text-anchor="end" textLength="13.5" lengthAdjust="spacingAndGlyphs" >Trial</text>
<rect x="505.3" y="389.1" width="34.5" height="7.2" fill="#8fd4f5"/>
<path d="M499.5 392.7 H505" stroke="#d6ddee" stroke-width="0.6"/>
<text x="497.8" y="395.0" font-size="7" font-weight="normal" fill="#606060" text-anchor="end" textLength="18" lengthAdjust="spacingAndGlyphs" >Order</text>
<text x="505.3" y="411" font-size="5.6" font-weight="normal" fill="#555" text-anchor="middle" >0</text>
<text x="539.9" y="411" font-size="5.6" font-weight="normal" fill="#555" text-anchor="middle" >100k</text>
<text x="574.5" y="411" font-size="5.6" font-weight="normal" fill="#555" text-anchor="middle" >200k</text>
<text x="609.1" y="411" font-size="5.6" font-weight="normal" fill="#555" text-anchor="middle" >300k</text>
<text x="643.7" y="411" font-size="5.6" font-weight="normal" fill="#555" text-anchor="middle" >400k</text>
<text x="678.3" y="411" font-size="5.6" font-weight="normal" fill="#555" text-anchor="middle" >500k</text>
<text x="712.9" y="411" font-size="5.6" font-weight="normal" fill="#555" text-anchor="middle" >600k</text>
<text x="747.5" y="411" font-size="5.6" font-weight="normal" fill="#555" text-anchor="middle" >700k</text>
<text x="782.1" y="411" font-size="5.6" font-weight="normal" fill="#555" text-anchor="middle" >800k</text>
<path d="M797 414.5 V418.5 H793 Z" fill="#6fa3e0"/>
</svg></body></html>
